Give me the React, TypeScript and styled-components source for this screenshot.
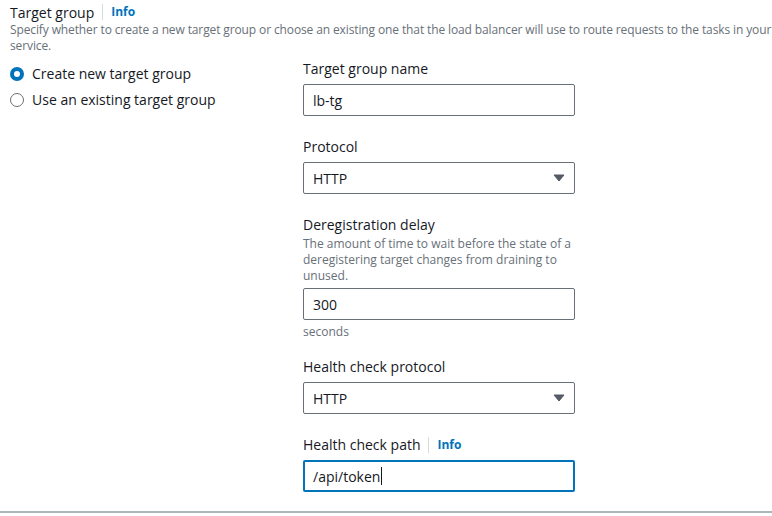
import React from "react";
import styled, { createGlobalStyle } from "styled-components";

const GlobalStyle = createGlobalStyle`
  body {
    margin: 0;
    background: #fff;
    font-family: "Open Sans", "Noto Sans", sans-serif;
    color: #16191f;
  }
`;

const Page = styled.div`
  width: 772px;
  height: 516px;
  overflow: hidden;
  box-sizing: border-box;
  padding: 2px 0 0 10px;
  position: relative;
`;

const TitleRow = styled.div`
  display: flex;
  align-items: center;
  height: 20px;
`;

const Title = styled.span`
  font-size: 14px;
  color: #16191f;
`;

const InfoLink = styled.span`
  font-size: 12px;
  font-weight: 700;
  color: #0073bb;
  border-left: 1px solid #d5dbdb;
  margin-left: 8px;
  padding-left: 8px;
  line-height: 16px;
`;

const Description = styled.p`
  margin: 0;
  font-size: 12px;
  line-height: 16px;
  color: #687078;
  letter-spacing: -0.12px;
`;

const Columns = styled.div`
  display: grid;
  grid-template-columns: 293px 272px;
  margin-top: 4px;
`;

const RadioList = styled.div`
  display: flex;
  flex-direction: column;
  gap: 6px;
  padding-top: 6px;
`;

const RadioRow = styled.label`
  display: flex;
  align-items: center;
  gap: 8px;
  font-size: 14px;
  line-height: 20px;
`;

const RadioDot = styled.span<{ checked?: boolean }>`
  width: 14px;
  height: 14px;
  box-sizing: border-box;
  border-radius: 50%;
  border: ${(p) => (p.checked ? "4px solid #0073bb" : "1.5px solid #687078")};
  background: #fff;
  flex-shrink: 0;
`;

const Fields = styled.div`
  display: flex;
  flex-direction: column;
  gap: 20px;
`;

const Field = styled.div`
  display: flex;
  flex-direction: column;
`;

const LabelRow = styled.div<{ tight?: boolean }>`
  display: flex;
  align-items: center;
  font-size: 14px;
  line-height: 22px;
  margin-bottom: ${(p) => (p.tight ? "0" : "4px")};
`;

const FieldDescription = styled(Description)`
  margin-bottom: 4px;
  letter-spacing: 0;
`;

const Input = styled.div<{ focused?: boolean }>`
  height: 32px;
  box-sizing: border-box;
  border: ${(p) => (p.focused ? "2px solid #0073bb" : "1px solid #687078")};
  border-radius: 2px;
  padding: 0 ${(p) => (p.focused ? "8px" : "9px")};
  display: flex;
  align-items: center;
  justify-content: space-between;
  font-size: 14px;
  color: #16191f;
`;

const Value = styled.span`
  display: flex;
  align-items: center;
`;

const Caret = styled.span`
  width: 1px;
  height: 18px;
  background: #16191f;
  margin-left: 1px;
`;

const Hint = styled.div`
  font-size: 12px;
  line-height: 16px;
  color: #687078;
  margin-top: 4px;
  margin-bottom: -4px;
`;

const Footer = styled.div`
  position: absolute;
  left: 0;
  right: 0;
  bottom: 3px;
  border-top: 2px solid #aab7b8;
`;

const Arrow = () => (
  <svg width="12" height="8" viewBox="0 0 12 8">
    <path d="M1 1h10L6 7z" fill="#545b64" stroke="#545b64" strokeLinejoin="round" />
  </svg>
);

export default function App() {
  return (
    <>
      <GlobalStyle />
      <Page>
        <TitleRow>
          <Title>Target group</Title>
          <InfoLink>Info</InfoLink>
        </TitleRow>
        <Description>
          Specify whether to create a new target group or choose an existing one that the load balancer will use to
          route requests to the tasks in your service.
        </Description>
        <Columns>
          <RadioList>
            <RadioRow>
              <RadioDot checked />
              Create new target group
            </RadioRow>
            <RadioRow>
              <RadioDot />
              Use an existing target group
            </RadioRow>
          </RadioList>
          <Fields>
            <Field>
              <LabelRow>Target group name</LabelRow>
              <Input>lb-tg</Input>
            </Field>
            <Field>
              <LabelRow>Protocol</LabelRow>
              <Input>
                HTTP
                <Arrow />
              </Input>
            </Field>
            <Field>
              <LabelRow tight>Deregistration delay</LabelRow>
              <FieldDescription>
                The amount of time to wait before the state of a deregistering target changes from draining to unused.
              </FieldDescription>
              <Input>300</Input>
              <Hint>seconds</Hint>
            </Field>
            <Field>
              <LabelRow>Health check protocol</LabelRow>
              <Input>
                HTTP
                <Arrow />
              </Input>
            </Field>
            <Field>
              <LabelRow>
                Health check path
                <InfoLink>Info</InfoLink>
              </LabelRow>
              <Input focused>
                <Value>
                  /api/token
                  <Caret />
                </Value>
              </Input>
            </Field>
          </Fields>
        </Columns>
        <Footer />
      </Page>
    </>
  );
}
